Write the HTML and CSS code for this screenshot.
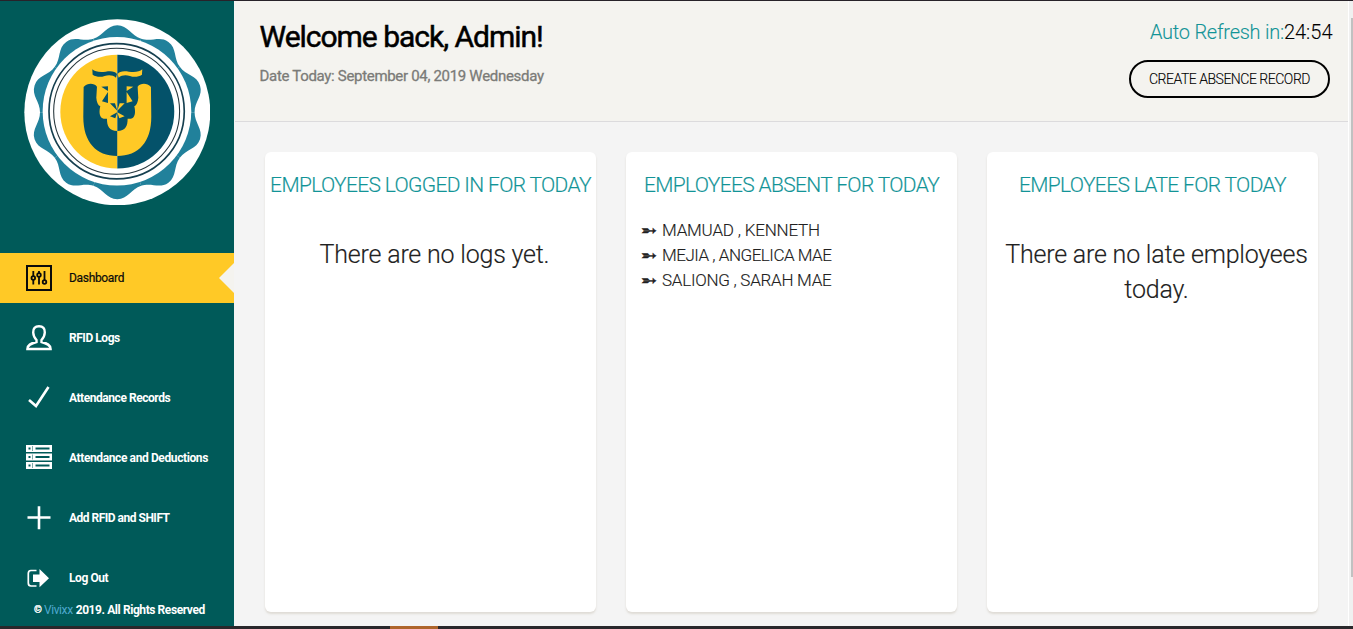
FILE: index.html
```
<!DOCTYPE html>
<html lang="en">
<head>
<meta charset="utf-8">
<title>Dashboard</title>
<link rel="stylesheet" href="styles.css">
</head>
<body>
<div class="app">
  <aside class="sidebar">
    <svg class="logo" viewBox="71 56 560 560">
      <defs>
        <path id="wave" d="M351 336L279.3 115.4C310 106 319 75 351 75C383 75 392 106 422.7 115.4Z"/>
        <g id="half">
          <path d="M276 207C284 214 298 217 316 214C332 211 345 213 350 221L347 232C338 224 325 223 313 227C299 232 287 229 277 223Z"/>
          <path d="M250 260C262 247 281 248 290 259L288 292C289 305 293 315 300 318C296 333 297 348 305 353C310 356 316 356 320 355C320 377 326 391 351 392V467C287 467 249 425 249 350Z"/>
          <path d="M303 259L323 258V272ZM323 275V308L305 303ZM329 309H344L351 331ZM351 336L345 354L329 348Z"/>
        </g>
      </defs>
      <circle cx="351" cy="336" r="279" fill="#fff"/>
      <g fill="#21819b">
        <use href="#wave"/>
        <use href="#wave" transform="rotate(36 351 336)"/>
        <use href="#wave" transform="rotate(72 351 336)"/>
        <use href="#wave" transform="rotate(108 351 336)"/>
        <use href="#wave" transform="rotate(144 351 336)"/>
        <use href="#wave" transform="rotate(180 351 336)"/>
        <use href="#wave" transform="rotate(216 351 336)"/>
        <use href="#wave" transform="rotate(252 351 336)"/>
        <use href="#wave" transform="rotate(288 351 336)"/>
        <use href="#wave" transform="rotate(324 351 336)"/>
      </g>
      <circle cx="350" cy="333" r="223" fill="#fff"/>
      <circle cx="349" cy="333" r="203" fill="none" stroke="#153f4f" stroke-width="5"/>
      <circle cx="349" cy="333" r="189" fill="none" stroke="#26363c" stroke-width="3.2"/>
      <path d="M351 163A171 171 0 0 0 351 505Z" fill="#ffc926"/>
      <path d="M351 163A171 171 0 0 1 351 505Z" fill="#04526a"/>
      <use href="#half" fill="#04526a"/>
      <use href="#half" fill="#ffc926" transform="translate(702 0) scale(-1 1)"/>
    </svg>
    <nav class="nav">
      <a class="item active">
        <svg class="icon" viewBox="0 0 26 26" fill="none" stroke="currentColor" stroke-width="1.8"><path stroke-width="2" d="M1 1H25V25H1Z"/><path d="M7.3 6V11M7.3 15V19.5M13 6V8M13 12V19.5M18.5 6V15"/><circle cx="7.3" cy="13" r="1.8"/><circle cx="13" cy="10" r="1.8"/><circle cx="18.5" cy="17" r="1.8"/></svg>
        <span class="dash">Dashboard</span>
      </a>
      <a class="item">
        <svg class="icon" viewBox="0 0 26 26" fill="none" stroke="currentColor" stroke-width="2.400"><path d="M13 1.200C9 1.200 7 3.500 7.200 7.500C7.400 11 8.500 13 10.500 15V17C4.500 18.500 1.500 20 1.400 24H24.600C24.500 20 21.500 18.500 15.500 17V15C17.500 13 18.600 11 18.800 7.500C19 3.500 17 1.200 13 1.200Z"/></svg>
        <span class="rfid">RFID Logs</span>
      </a>
      <a class="item">
        <svg class="icon" viewBox="0 0 26 26" fill="none" stroke="currentColor" stroke-width="2.600"><path d="M3 15L10 21L22.500 2"/></svg>
        <span class="records">Attendance Records</span>
      </a>
      <a class="item">
        <svg class="icon" viewBox="0 0 26 26" fill="currentColor" fill-rule="evenodd"><path d="M0 0H26V7H0ZM2.500 2.500V4.500H4.500V2.500ZM9.500 2.500V4.500H23.500V2.500ZM6.500 1V6H7V1ZM0 8.500H26V15.500H0ZM2.500 11V13H4.500V11ZM9.500 11V13H23.500V11ZM6.500 9.500V14.500H7V9.500ZM0 17H26V24H0ZM2.500 19.500V21.500H4.500V19.500ZM9.500 19.500V21.500H23.500V19.500ZM6.500 18V23H7V18Z"/></svg>
        <span class="deduct">Attendance and Deductions</span>
      </a>
      <a class="item">
        <svg class="icon" viewBox="0 0 26 26" fill="none" stroke="currentColor" stroke-width="2.600"><path d="M13 1.200V24.200M1.500 12.500H24.500"/></svg>
        <span class="add">Add RFID and SHIFT</span>
      </a>
      <a class="item">
        <svg class="icon" viewBox="0 0 26 26" fill="currentColor"><path fill="none" stroke="currentColor" stroke-width="1.700" d="M10.500 5.500H5C3 5.500 2.300 6.700 2.300 8.500V18C2.300 20 3 21 5 21H10.500"/><path d="M7 9.500H13.500V4L23 13.200L13.500 22.300V17H7Z"/></svg>
        <span class="logout">Log Out</span>
      </a>
    </nav>
    <div class="copyright"><span class="mark">©</span> <span class="brand">Vivixx</span> <span>2019. All Rights Reserved</span></div>
  </aside>
  <main class="main">
    <header class="header">
      <div class="greeting">
        <h1>Welcome back, Admin!</h1>
        <p>Date Today: September 04, 2019 Wednesday</p>
      </div>
      <div class="actions">
        <div class="refresh"><span>Auto Refresh in:</span><b>24:54</b></div>
        <button class="create">CREATE ABSENCE RECORD</button>
      </div>
    </header>
    <div class="cards">
      <section class="card">
        <h2>EMPLOYEES LOGGED IN FOR TODAY</h2>
        <p class="empty">There are no logs yet.</p>
      </section>
      <section class="card">
        <h2>EMPLOYEES ABSENT FOR TODAY</h2>
        <ul>
          <li><i>➵</i><span class="n1">MAMUAD , KENNETH</span></li>
          <li><i>➵</i><span class="n2">MEJIA , ANGELICA MAE</span></li>
          <li><i>➵</i><span class="n3">SALIONG , SARAH MAE</span></li>
        </ul>
      </section>
      <section class="card">
        <h2>EMPLOYEES LATE FOR TODAY</h2>
        <p class="empty">There are no late employees today.</p>
      </section>
    </div>
  </main>
  <div class="scroll"><div class="thumb"></div></div>
</div>
<div class="taskbar"><div class="task"></div></div>
</body>
</html>
```
FILE: styles.css
```
* { box-sizing: border-box; }
body { margin: 0; height: 629px; overflow: hidden; display: flex; flex-direction: column; border-top: 1px solid #272229; font-family: Roboto, "Liberation Sans", sans-serif; background: #f4f4f4; }
h1, h2, p, ul { margin: 0; padding: 0; }
.app { display: flex; height: 625px; }
.sidebar { width: 234px; height: 625px; background: #005a59; color: #fff; flex: none; display: flex; flex-direction: column; }
.logo { width: 186.600px; height: 186.600px; margin: 17.600px 0 47.800px 23.600px; flex: none; }
.nav { display: grid; grid-auto-rows: 50px; row-gap: 10px; }
.item { display: flex; align-items: center; gap: 17px; padding-left: 26px; font-size: 12px; font-weight: 700; letter-spacing: -.45px; white-space: nowrap; }
.item span { padding-top: 1px; }
.icon { width: 26px; height: 26px; flex: none; }
.active { background: #ffc926; color: #0b0b0b; font-weight: 400; }
.active::after { content: ""; margin-left: auto; width: 15px; height: 30px; background: #f4f3ef; clip-path: polygon(100% 0, 100% 100%, 0 50%); }
.dash { letter-spacing: -.32px; -webkit-text-stroke: .2px; }
.add { letter-spacing: -.5px; }
.deduct { letter-spacing: -.39px; }
.logout { letter-spacing: -.42px; }
.copyright { display: flex; gap: 3px; padding-left: 34px; height: 14px; line-height: 15px; font-size: 12px; font-weight: 700; letter-spacing: -.42px; white-space: nowrap; }
.mark { font-size: 10px; width: 7px; line-height: 13px; -webkit-text-stroke: .4px; }
.brand { color: #4fa9cf; font-weight: 400; }
.main { width: 1115px; padding-left: 1px; background: #f4f4f4; border-right: 1px solid #fff; }
.header { display: flex; justify-content: space-between; height: 121px; border-bottom: 1px solid #dcdbdd; background: #f4f3ef; padding: 0 18px 0 24.500px; }
h1 { margin-top: 18px; font-size: 30px; line-height: 36px; font-weight: 400; letter-spacing: -1.02px; -webkit-text-stroke: .5px; color: #000; }
.greeting p { margin-top: 12px; font-size: 15px; line-height: 18px; letter-spacing: -.31px; color: #7b7b78; -webkit-text-stroke: .3px; }
.actions { display: flex; flex-direction: column; align-items: flex-end; }
.refresh { margin: 19px -2.500px 0 0; font-size: 20px; line-height: 24px; font-weight: 300; color: #129497; letter-spacing: -.25px; white-space: nowrap; -webkit-text-stroke: .1px; }
.refresh b { font-weight: 300; color: #000; letter-spacing: 0; }
.create { margin-top: 16px; width: 201px; height: 38px; border: 2px solid #000; border-radius: 19px; background: transparent; padding: 0; font: 300 14px Roboto, sans-serif; letter-spacing: -.48px; color: #000; white-space: nowrap; -webkit-text-stroke: .1px; }
.cards { display: grid; grid-template-columns: repeat(3, 331px); gap: 30px; padding: 30px 0 0 30px; }
.card { height: 460px; background: #fff; border-radius: 6px; box-shadow: 0 2px 2px rgba(204,197,185,.5); padding-top: 19px; }
h2 { font-size: 21px; line-height: 28px; font-weight: 300; letter-spacing: -.66px; text-align: center; color: #129497; white-space: nowrap; -webkit-text-stroke: .15px; }
.empty { margin-top: 38px; padding: 0 8px 0 16px; text-align: center; font-size: 25px; line-height: 35px; font-weight: 300; letter-spacing: -.2px; color: #212121; -webkit-text-stroke: .15px; }
.card ul { list-style: none; padding: 19px 0 0 15px; }
.card li { display: flex; height: 25px; line-height: 25px; font-size: 17px; font-weight: 300; color: #212121; -webkit-text-stroke: .15px; }
.card i { width: 21px; font: 19px/24px "DejaVu Sans", sans-serif; -webkit-text-stroke: .5px; }
.n1 { letter-spacing: -.2px; }
.n2 { letter-spacing: -.48px; }
.n3 { letter-spacing: -.26px; }
.scroll { flex: 1; background: #f0f0f0; padding: 17px 0 0 2px; }
.thumb { height: 559px; background: #c1c1c1; }
.taskbar { height: 3px; background: #29282b; padding-left: 390px; }
.task { width: 48px; height: 3px; background: #ae652b; }
```
